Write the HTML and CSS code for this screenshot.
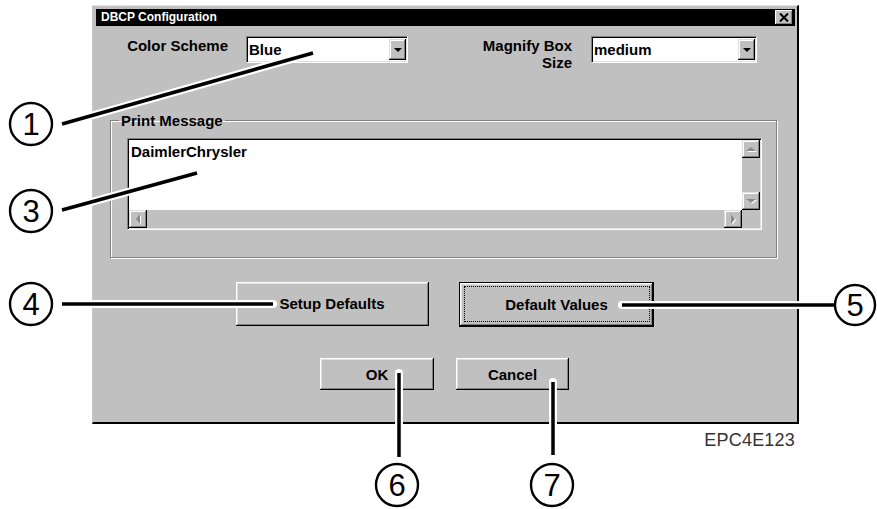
FILE: index.html
```html
<!DOCTYPE html>
<html>
<head>
<meta charset="utf-8">
<link rel="stylesheet" href="styles.css">
</head>
<body>
<div class="page">
  <div class="wrap">
    <div class="dialog">
      <div class="titlebar">
        <span class="title">DBCP Configuration</span>
        <span class="close">
          <svg width="10" height="9" viewBox="0 0 10 9"><path d="M1 0.5 L9 8.5 M9 0.5 L1 8.5" stroke="#000" stroke-width="2" fill="none"/></svg>
        </span>
      </div>
      <div class="content">
        <div class="row-top">
          <div class="lbl lbl-color">Color Scheme</div>
          <div class="combo combo-color">
            <span class="combo-text">Blue</span>
            <span class="combo-btn"><span class="arrow-down"></span></span>
          </div>
          <div class="lbl lbl-magnify">Magnify Box<br>Size</div>
          <div class="combo combo-magnify">
            <span class="combo-text">medium</span>
            <span class="combo-btn"><span class="arrow-down"></span></span>
          </div>
        </div>
        <fieldset class="group">
          <legend class="legend">Print Message</legend>
          <div class="memo">
            <div class="memo-text">DaimlerChrysler</div>
            <div class="vscroll">
              <span class="sbtn"><span class="tri tri-up"></span></span>
              <span class="track"></span>
              <span class="sbtn"><span class="tri tri-down"></span></span>
            </div>
            <div class="hscroll">
              <span class="sbtn"><span class="tri tri-left"></span></span>
              <span class="track"></span>
              <span class="sbtn"><span class="tri tri-right"></span></span>
            </div>
            <div class="corner"></div>
          </div>
        </fieldset>
        <div class="row-btn1">
          <div class="btn btn-setup">Setup Defaults</div>
          <div class="btn btn-default"><span class="focus">Default Values</span></div>
        </div>
        <div class="row-btn2">
          <div class="btn btn-ok">OK</div>
          <div class="btn btn-cancel">Cancel</div>
        </div>
      </div>
    </div>
    <div class="caption">EPC4E123</div>
  </div>
  <svg class="callouts" width="877" height="509" viewBox="0 0 877 509">
    <g class="halo">
      <line x1="62" y1="124" x2="313" y2="53"/>
      <line x1="62" y1="210" x2="197" y2="173"/>
      <line x1="62" y1="304" x2="273" y2="304"/>
      <line x1="622" y1="305" x2="835" y2="305"/>
      <line x1="399" y1="373" x2="399" y2="457"/>
      <line x1="553" y1="382" x2="553" y2="455"/>
    </g>
    <g class="ink">
      <line x1="62" y1="124" x2="313" y2="53"/>
      <line x1="62" y1="210" x2="197" y2="173"/>
      <line x1="62" y1="304" x2="273" y2="304"/>
      <line x1="622" y1="305" x2="835" y2="305"/>
      <line x1="399" y1="373" x2="399" y2="457"/>
      <line x1="553" y1="382" x2="553" y2="455"/>
    </g>
    <g class="rings">
      <circle cx="31" cy="124" r="21"/>
      <circle cx="31" cy="211" r="21"/>
      <circle cx="31" cy="304" r="21"/>
      <circle cx="855" cy="305" r="20"/>
      <circle cx="397" cy="485" r="21"/>
      <circle cx="552" cy="485" r="21"/>
    </g>
    <g class="nums">
      <text x="31" y="135">1</text>
      <text x="31" y="222">3</text>
      <text x="31" y="315">4</text>
      <text x="855" y="316">5</text>
      <text x="397" y="496">6</text>
      <text x="552" y="496">7</text>
    </g>
  </svg>
</div>
</body>
</html>
```

FILE: styles.css
```css
html, body {
  margin: 0;
  padding: 0;
  background: #fff;
}

.page {
  position: relative;
  width: 877px;
  height: 509px;
  overflow: hidden;
  font-family: "Liberation Sans", Arial, sans-serif;
}

.wrap {
  width: 707px;
  margin-left: 92px;
  padding-top: 5px;
}

.dialog {
  box-sizing: border-box;
  width: 707px;
  height: 419px;
  background: #c0c0c0;
  border-top: 1px solid #e4e4e4;
  border-left: 1px solid #c8c8c8;
  border-right: 2px solid #000;
  border-bottom: 2px solid #000;
  padding: 3px 2px 0 3px;
  display: flex;
  flex-direction: column;
}

.titlebar {
  height: 17px;
  background: #000;
  display: flex;
  align-items: center;
  justify-content: space-between;
  padding: 0 2px 0 5px;
}

.title {
  color: #fff;
  font-weight: bold;
  font-size: 12px;
  line-height: 17px;
}

.close {
  box-sizing: border-box;
  width: 18px;
  height: 15px;
  background: #c0c0c0;
  box-shadow: inset -1px -1px #000, inset 1px 1px #fff, inset -2px -2px #808080;
  display: flex;
  align-items: center;
  justify-content: center;
  padding: 0 1px 1px 0;
}

.close svg {
  display: block;
}

.content {
  flex: 1;
  display: flex;
  flex-direction: column;
  font-size: 15px;
  font-weight: bold;
  line-height: 17px;
  color: #000;
}

.row-top {
  display: flex;
  align-items: flex-start;
  margin-top: 10px;
}

.lbl {
  text-align: right;
  padding-top: 1px;
}

.lbl-color {
  width: 132px;
  margin-right: 18px;
}

.lbl-magnify {
  width: 164px;
  margin-right: 19px;
}

.combo {
  box-sizing: border-box;
  height: 27px;
  background: #fff;
  border: 1px solid;
  border-color: #808080 #fff #fff #808080;
  box-shadow: inset 1px 1px #000, inset -1px -1px #dfdfdf;
  display: flex;
  align-items: center;
  padding: 0 1px 0 2px;
}

.combo-color {
  width: 162px;
}

.combo-magnify {
  width: 166px;
}

.combo-text {
  flex: 1;
  align-self: flex-start;
  padding-top: 4px;
}

.combo-btn {
  box-sizing: border-box;
  width: 17px;
  height: 21px;
  background: #c0c0c0;
  box-shadow: inset -1px -1px #000, inset 1px 1px #dfdfdf, inset -2px -2px #808080, inset 2px 2px #fff;
  display: flex;
  align-items: center;
  justify-content: center;
}

.arrow-down {
  width: 0;
  height: 0;
  border-left: 4px solid transparent;
  border-right: 4px solid transparent;
  border-top: 4px solid #000;
}

.group {
  box-sizing: border-box;
  width: 667px;
  margin: 41px 0 0 14px;
  padding: 0 0 27px 16px;
  min-width: 0;
  border: 1px solid #808080;
  box-shadow: inset 1px 1px #fff, 1px 1px #fff;
}

.legend {
  padding: 0 2px;
  margin-left: -8px;
}

.memo {
  box-sizing: border-box;
  width: 635px;
  height: 92px;
  margin-top: 9px;
  border: 1px solid;
  border-color: #808080 #fff #fff #808080;
  box-shadow: inset 1px 1px #000, inset -1px -1px #dfdfdf;
  padding: 1px;
  display: grid;
  grid-template-columns: 1fr 18px;
  grid-template-rows: 1fr 18px;
}

.memo-text {
  background: #fff;
  padding: 3px 0 0 2px;
}

.vscroll {
  background: #c0c0c0;
  display: flex;
  flex-direction: column;
}

.hscroll {
  background: #c0c0c0;
  display: flex;
}

.track {
  flex: 1;
}

.corner {
  background: #c0c0c0;
}

.sbtn {
  box-sizing: border-box;
  width: 18px;
  height: 18px;
  flex: none;
  background: #c0c0c0;
  box-shadow: inset -1px -1px #000, inset 1px 1px #dfdfdf, inset -2px -2px #808080, inset 2px 2px #fff;
  display: flex;
  align-items: center;
  justify-content: center;
}

.tri {
  width: 0;
  height: 0;
  filter: drop-shadow(1px 1px 0 #fff);
}

.tri-up {
  border-left: 5px solid transparent;
  border-right: 5px solid transparent;
  border-bottom: 4px solid #8a8a8a;
}

.tri-down {
  border-left: 5px solid transparent;
  border-right: 5px solid transparent;
  border-top: 4px solid #8a8a8a;
}

.tri-left {
  border-top: 5px solid transparent;
  border-bottom: 5px solid transparent;
  border-right: 4px solid #8a8a8a;
}

.tri-right {
  border-top: 5px solid transparent;
  border-bottom: 5px solid transparent;
  border-left: 4px solid #8a8a8a;
}

.row-btn1 {
  display: flex;
  justify-content: center;
  align-items: flex-start;
  gap: 30px;
  margin-top: 24px;
  padding-right: 2px;
}

.row-btn2 {
  display: flex;
  justify-content: center;
  gap: 22px;
  margin-top: 31px;
  padding-right: 2px;
}

.btn {
  box-sizing: border-box;
  background: #c0c0c0;
  box-shadow: inset -1px -1px #000, inset 1px 1px #fff, inset -2px -2px #808080, inset 2px 2px #dfdfdf;
  display: flex;
  align-items: center;
  justify-content: center;
}

.btn-setup {
  width: 193px;
  height: 44px;
  padding-bottom: 1px;
}

.btn-default {
  width: 195px;
  height: 45px;
  border: 1px solid #000;
  padding: 3px 3px 4px 4px;
  align-items: stretch;
}

.focus {
  flex: 1;
  border: 1px dotted #000;
  display: flex;
  align-items: center;
  justify-content: center;
}

.btn-ok {
  width: 114px;
  height: 32px;
}

.btn-cancel {
  width: 113px;
  height: 32px;
}

.caption {
  margin-top: 6px;
  padding-right: 4px;
  text-align: right;
  font-size: 18px;
  line-height: 20px;
  color: #333;
  letter-spacing: 0.2px;
}

.callouts {
  position: absolute;
  left: 0;
  top: 0;
  pointer-events: none;
}

.halo line {
  stroke: #fff;
  stroke-width: 8;
  stroke-linecap: round;
}

.ink line {
  stroke: #000;
  stroke-width: 3.5;
  stroke-linecap: butt;
}

.rings circle {
  fill: #fff;
  stroke: #000;
  stroke-width: 2.4;
}

.nums text {
  font-family: "Liberation Sans", Arial, sans-serif;
  font-size: 31px;
  text-anchor: middle;
  fill: #000;
}
```
